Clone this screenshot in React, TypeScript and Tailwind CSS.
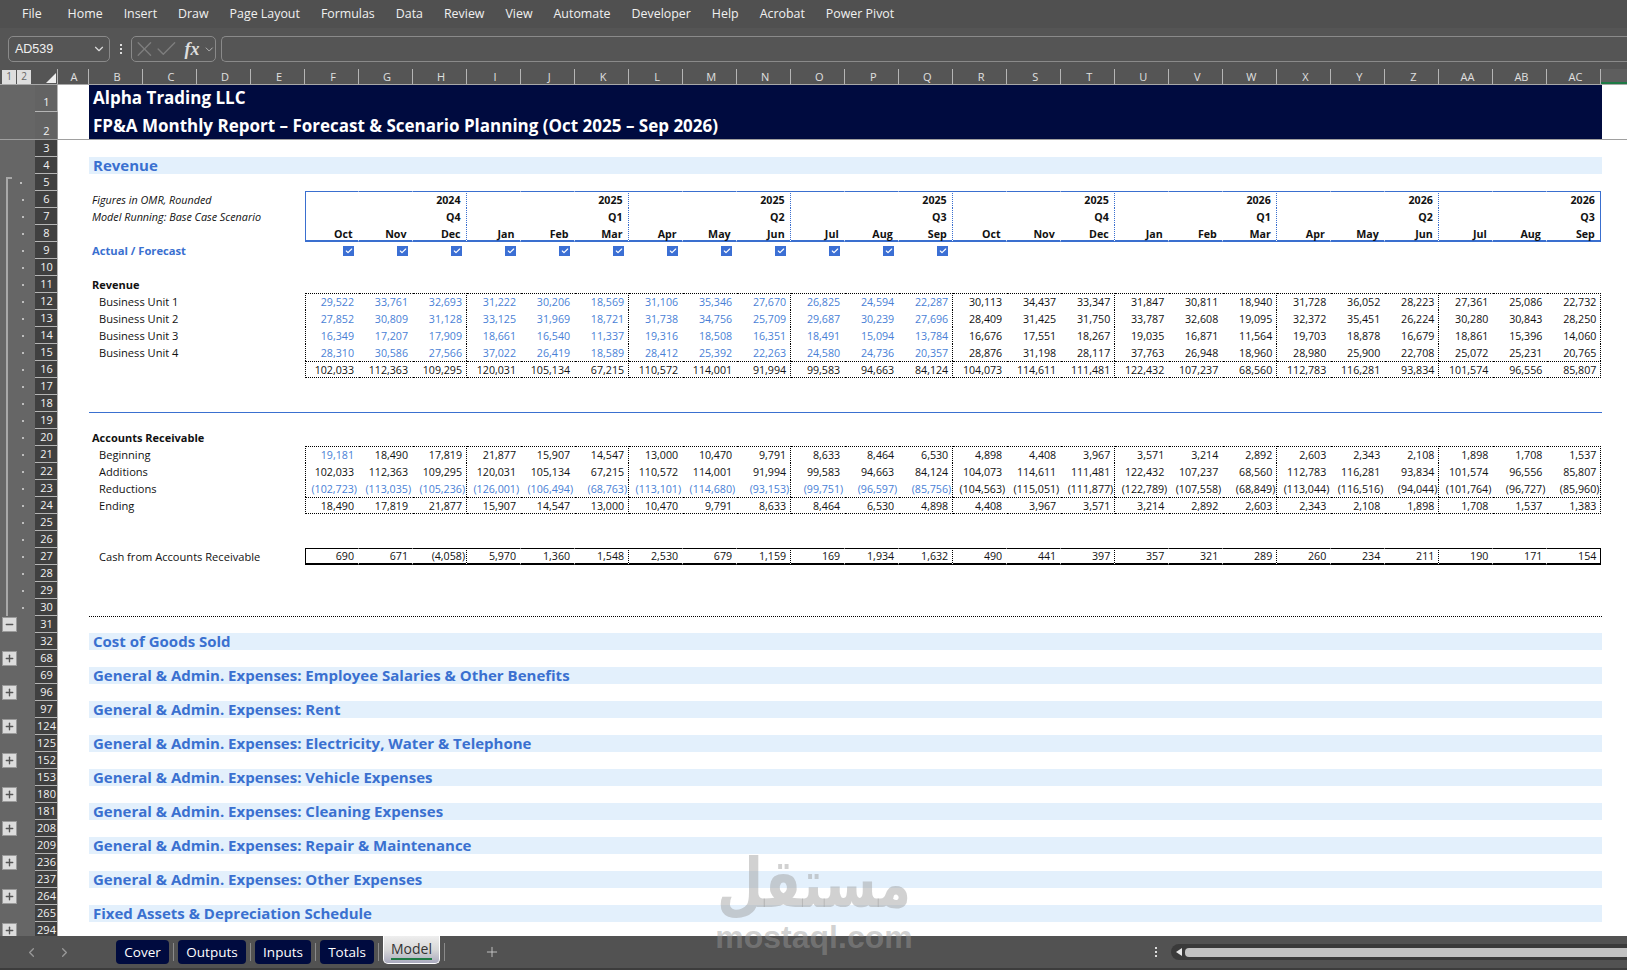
import React from "react";
import clsx from "clsx";
import { X, Check, ChevronDown, ChevronLeft, ChevronRight, Plus, Minus } from "lucide-react";

const COLS = ["F","G","H","I","J","K","L","M","N","O","P","Q","R","S","T","U","V","W","X","Y","Z","AA","AB","AC"];
const MONTHS = ["Oct","Nov","Dec","Jan","Feb","Mar","Apr","May","Jun","Jul","Aug","Sep","Oct","Nov","Dec","Jan","Feb","Mar","Apr","May","Jun","Jul","Aug","Sep"];
const YEARS = ["2024","2025","2025","2025","2025","2026","2026","2026"];
const QUARTERS = ["Q4","Q1","Q2","Q3","Q4","Q1","Q2","Q3"];
const sp = (s: string) => s.split(" ");

const TOTAL = sp("102,033 112,363 109,295 120,031 105,134 67,215 110,572 114,001 91,994 99,583 94,663 84,124 104,073 114,611 111,481 122,432 107,237 68,560 112,783 116,281 93,834 101,574 96,556 85,807");
const DATA: Record<number, string[]> = {
  12: sp("29,522 33,761 32,693 31,222 30,206 18,569 31,106 35,346 27,670 26,825 24,594 22,287 30,113 34,437 33,347 31,847 30,811 18,940 31,728 36,052 28,223 27,361 25,086 22,732"),
  13: sp("27,852 30,809 31,128 33,125 31,969 18,721 31,738 34,756 25,709 29,687 30,239 27,696 28,409 31,425 31,750 33,787 32,608 19,095 32,372 35,451 26,224 30,280 30,843 28,250"),
  14: sp("16,349 17,207 17,909 18,661 16,540 11,337 19,316 18,508 16,351 18,491 15,094 13,784 16,676 17,551 18,267 19,035 16,871 11,564 19,703 18,878 16,679 18,861 15,396 14,060"),
  15: sp("28,310 30,586 27,566 37,022 26,419 18,589 28,412 25,392 22,263 24,580 24,736 20,357 28,876 31,198 28,117 37,763 26,948 18,960 28,980 25,900 22,708 25,072 25,231 20,765"),
  16: TOTAL,
  21: sp("19,181 18,490 17,819 21,877 15,907 14,547 13,000 10,470 9,791 8,633 8,464 6,530 4,898 4,408 3,967 3,571 3,214 2,892 2,603 2,343 2,108 1,898 1,708 1,537"),
  22: TOTAL,
  23: sp("(102,723) (113,035) (105,236) (126,001) (106,494) (68,763) (113,101) (114,680) (93,153) (99,751) (96,597) (85,756) (104,563) (115,051) (111,877) (122,789) (107,558) (68,849) (113,044) (116,516) (94,044) (101,764) (96,727) (85,960)"),
  24: sp("18,490 17,819 21,877 15,907 14,547 13,000 10,470 9,791 8,633 8,464 6,530 4,898 4,408 3,967 3,571 3,214 2,892 2,603 2,343 2,108 1,898 1,708 1,537 1,383"),
  27: sp("690 671 (4,058) 5,970 1,360 1,548 2,530 679 1,159 169 1,934 1,632 490 441 397 357 321 289 260 234 211 190 171 154"),
};
const LABELS: Record<number, string> = {
  12: "Business Unit 1", 13: "Business Unit 2", 14: "Business Unit 3", 15: "Business Unit 4",
  21: "Beginning", 22: "Additions", 23: "Reductions", 24: "Ending", 27: "Cash from Accounts Receivable",
};
const BANDS: Record<number, string> = {
  4: "Revenue",
  32: "Cost of Goods Sold",
  69: "General & Admin. Expenses: Employee Salaries & Other Benefits",
  97: "General & Admin. Expenses: Rent",
  125: "General & Admin. Expenses: Electricity, Water & Telephone",
  153: "General & Admin. Expenses: Vehicle Expenses",
  181: "General & Admin. Expenses: Cleaning Expenses",
  209: "General & Admin. Expenses: Repair & Maintenance",
  237: "General & Admin. Expenses: Other Expenses",
  265: "Fixed Assets & Depreciation Schedule",
};
const ROWS = [
  ...Array.from({ length: 30 }, (_, i) => i + 3),
  68, 69, 96, 97, 124, 125, 152, 153, 180, 181, 208, 209, 236, 237, 264, 265, 294,
];
const PLUS = [68, 96, 124, 152, 180, 208, 236, 264, 294];

function Outline({ n }: { n: number }) {
  if (n === 5)
    return (
      <div className="w-[35px] shrink-0 flex items-center bg-[#666666]">
        <div className="ml-[6px] mt-[3px] w-[6px] self-stretch border-l-2 border-t-2 border-[#a8a8a8]" />
        <div className="ml-[8px] w-[2px] h-[2px] bg-[#bdbdbd]" />
      </div>
    );
  if (n > 5 && n <= 30)
    return (
      <div className="w-[35px] shrink-0 flex items-center bg-[#666666]">
        <div className="ml-[6px] w-[2px] self-stretch bg-[#a8a8a8]" />
        <div className="ml-[14px] w-[2px] h-[2px] bg-[#bdbdbd]" />
      </div>
    );
  if (n === 31 || PLUS.includes(n))
    return (
      <div className="w-[35px] shrink-0 flex items-start bg-[#666666]">
        <div className="ml-[2px] mt-[1px] w-[15px] h-[15px] bg-[#dcdcdc] border border-[#9a9a9a] flex items-center justify-center text-[#555555]">
          {n === 31 ? <Minus size={11} strokeWidth={3} /> : <Plus size={11} strokeWidth={3} />}
        </div>
      </div>
    );
  return <div className="w-[35px] shrink-0 bg-[#666666]" />;
}

function Head({ n, light, tall }: { n: number; light?: boolean; tall?: boolean }) {
  return (
    <div
      className={clsx(
        "w-[23px] shrink-0 flex justify-center pl-[1px] border-r border-[#8a8a8a] text-[11px] text-[#f2f2f2]",
        light ? "bg-[#636363] items-end" : "bg-[#404040] items-center pt-[1px] border-b border-[#b5b5b5]",
        tall && "border-b border-[#b5b5b5] pb-[1px]"
      )}
    >
      {n}
    </div>
  );
}

function Values({ n }: { n: number }) {
  const vals = DATA[n];
  const boxed = n === 27;
  const topDot = n === 12 || n === 16 || n === 21 || n === 24;
  const botDot = n === 16 || n === 24;
  return (
    <>
      {vals.map((v, i) => {
        const paren = v.startsWith("(");
        const blue = (n >= 12 && n <= 15 && i < 12) || (n === 23 && i < 12) || (n === 21 && i === 0);
        const qEnd = i % 3 === 2;
        return (
          <div
            key={i}
            className={clsx(
              "w-[54.02px] shrink-0 flex items-center justify-end border-black",
              paren ? "pr-[1px]" : "pr-[4px]",
              blue ? "text-[#4a7fd6]" : "text-[#111111]",
              i === 0 && "border-l",
              i === 0 && !boxed && "[border-left-style:dotted]",
              "border-r",
              !qEnd && "border-r-transparent",
              qEnd && !(boxed && i === 23) && "[border-right-style:dotted]",
              boxed && "border-t border-b-2",
              topDot && "border-t [border-top-style:dotted]",
              botDot && "border-b [border-bottom-style:dotted]"
            )}
          >
            {v}
          </div>
        );
      })}
    </>
  );
}

function HeaderCells({ kind }: { kind: number }) {
  return (
    <>
      {COLS.map((_, i) => {
        const q = Math.floor(i / 3);
        const qEnd = i % 3 === 2;
        const text = kind === 6 ? (qEnd ? YEARS[q] : "") : kind === 7 ? (qEnd ? QUARTERS[q] : "") : MONTHS[i];
        return (
          <div
            key={i}
            className={clsx(
              "w-[54.02px] shrink-0 flex items-center justify-end pr-[5.5px] font-bold text-[#111111] border-[#3a6fcf]",
              i === 0 && "border-l",
              "border-r",
              !qEnd && "border-r-transparent",
              qEnd && i !== 23 && "[border-right-style:dotted]",
              kind === 6 && "border-t",
              kind === 8 && "border-b-2 pt-[2px]"
            )}
          >
            {text}
          </div>
        );
      })}
    </>
  );
}

function Checks() {
  return (
    <>
      {COLS.map((_, i) => (
        <div key={i} className="w-[54.02px] shrink-0 flex items-center justify-end pr-[5px]">
          {i < 12 && (
            <div className="w-[11px] h-[10px] bg-[#3b6fd4] flex items-center justify-center text-white">
              <Check size={8} strokeWidth={3.5} />
            </div>
          )}
        </div>
      ))}
    </>
  );
}

function Label({ children, className }: { children?: React.ReactNode; className?: string }) {
  return <div className={clsx("w-[216px] shrink-0 flex items-center whitespace-nowrap pt-[1px] text-[#111111]", className)}>{children}</div>;
}

function SheetRow({ n }: { n: number }) {
  let content: React.ReactNode = null;
  let rowCls = "";
  if (BANDS[n]) {
    content = (
      <div className="w-[1513px] shrink-0 bg-[#e3f0fc] flex items-center pl-[4px] pb-[1px] text-[15px] font-bold text-[#3a70d0] whitespace-nowrap">
        {BANDS[n]}
      </div>
    );
  } else if (n === 6 || n === 7) {
    content = (
      <>
        <Label className="pl-[3px] italic text-[10.8px]">{n === 6 ? "Figures in OMR, Rounded" : "Model Running: Base Case Scenario"}</Label>
        <HeaderCells kind={n} />
      </>
    );
  } else if (n === 8) {
    content = (
      <>
        <Label />
        <HeaderCells kind={8} />
      </>
    );
  } else if (n === 9) {
    content = (
      <>
        <Label className="pl-[3px] font-bold text-[11.2px] !text-[#3a70d0]">Actual / Forecast</Label>
        <Checks />
      </>
    );
  } else if (n === 11 || n === 20) {
    content = <Label className="pl-[3px] font-bold text-[11px]">{n === 11 ? "Revenue" : "Accounts Receivable"}</Label>;
  } else if (DATA[n]) {
    content = (
      <>
        <Label className="pl-[10px] text-[11.1px]">{LABELS[n]}</Label>
        <Values n={n} />
      </>
    );
  } else if (n === 19) {
    rowCls = "border-t border-[#3a70d0] w-[1513px]";
  } else if (n === 31) {
    rowCls = "border-t [border-top-style:dotted] border-black w-[1513px]";
  }
  return (
    <div className="flex h-[17px] shrink-0">
      <Outline n={n} />
      <Head n={n} />
      <div className="flex-1 flex bg-white text-[10.67px]">
        <div className="w-[31px] shrink-0" />
        {rowCls ? <div className={rowCls} /> : content}
      </div>
    </div>
  );
}

function TitleRow({ n, text, big }: { n: number; text: string; big?: boolean }) {
  return (
    <div className={clsx("flex shrink-0", big ? "h-[28px] border-b border-[#a0a0a0]" : "h-[27px]")}>
      <div className="w-[35px] shrink-0 bg-[#666666]" />
      <Head n={n} light tall={n === 1} />
      <div className="flex-1 flex bg-white">
        <div className="w-[31px] shrink-0" />
        <div className={clsx("w-[1513px] shrink-0 bg-[#000b3f] flex items-center pl-[4px] text-white font-bold text-[17px] whitespace-nowrap", !big && "pb-[1px]")}>
          {text}
        </div>
      </div>
    </div>
  );
}

const MENU = ["Home","Insert","Draw","Page Layout","Formulas","Data","Review","View","Automate","Developer","Help","Acrobat","Power Pivot"];

function Tab({ label, ml }: { label: string; ml: string }) {
  return (
    <div className={clsx("h-[24px] bg-[#000b3f] rounded-[4px] flex items-center justify-center text-white text-[13.5px]", ml)}>
      {label}
    </div>
  );
}

const TabSep = () => <div className="w-px h-[18px] bg-[#8a8a8a] mx-[4px] mt-[3px]" />;

export default function App() {
  return (
    <div className="relative w-[1627px] h-[970px] overflow-hidden flex flex-col bg-[#555555] font-['Open_Sans',sans-serif]">
      {/* Ribbon tabs */}
      <div className="h-[28px] shrink-0 flex items-center bg-[#505050] pl-[22px] gap-[21px] text-[12.4px] text-[#f0f0f0] shadow-[0_1px_2px_#333333]">
        <span className="mr-[5px]">File</span>
        {MENU.map((m) => (
          <span key={m}>{m}</span>
        ))}
      </div>
      {/* Formula bar */}
      <div className="h-[41px] shrink-0 flex items-start pt-[8px] pl-[8px] bg-[#555555]">
        <div className="w-[102px] h-[26px] border border-[#8a8a8a] rounded-[5px] flex items-center justify-between pl-[6px] pr-[3px] text-[12.5px] text-[#f0f0f0] font-['Liberation_Sans',sans-serif]">
          AD539
          <ChevronDown size={14} className="text-[#dddddd]" />
        </div>
        <div className="w-[21px] h-[26px] flex flex-col items-center justify-center gap-[2px]">
          <div className="w-[2px] h-[2px] bg-[#dddddd]" />
          <div className="w-[2px] h-[2px] bg-[#dddddd]" />
          <div className="w-[2px] h-[2px] bg-[#dddddd]" />
        </div>
        <div className="w-[85px] h-[26px] border border-[#8a8a8a] rounded-[5px] flex items-center">
          <X size={26} strokeWidth={1.3} className="text-[#7e7e7e]" />
          <Check size={26} strokeWidth={1.3} className="text-[#7e7e7e] -ml-[3px]" />
          <span className="ml-[6px] font-['Liberation_Serif',serif] italic font-bold text-[18px] text-[#dddddd]">fx</span>
          <ChevronDown size={13} strokeWidth={1.5} className="text-[#cccccc] ml-[3px]" />
        </div>
        <div className="ml-[5px] flex-1 h-[26px] border border-r-0 border-[#8a8a8a] rounded-l-[5px]" />
      </div>
      {/* Column headers */}
      <div className="h-[16px] shrink-0 flex border-b border-[#a8a8a8] text-[11px] text-[#e0e0e0]">
        <div className="w-[35px] shrink-0 flex items-center gap-[1px] pl-[2px]">
          <div className="w-[14px] h-[14px] bg-[#dedede] text-[#666666] flex items-center justify-center text-[10px]">1</div>
          <div className="w-[14px] h-[14px] bg-[#dedede] text-[#666666] flex items-center justify-center text-[10px]">2</div>
        </div>
        <div className="w-[23px] shrink-0 flex items-end justify-end pr-[1px] pb-[1px] border-r border-[#b5b5b5]">
          <svg width="10" height="10" viewBox="0 0 10 10"><path d="M10 0V10H0Z" fill="#eeeeee" /></svg>
        </div>
        <div className="w-[31px] shrink-0 flex items-center justify-center pl-[2px] pt-[1px] border-r border-[#b5b5b5]">A</div>
        {["B","C","D","E",...COLS].map((c) => (
          <div key={c} className="w-[54.02px] shrink-0 flex items-center justify-center pl-[3px] pt-[1px] border-r border-[#b5b5b5]">{c}</div>
        ))}
        <div className="flex-1 border-b-2 border-[#1e7a45] bg-[#5e5e5e]" />
      </div>
      {/* Grid */}
      <div className="flex-1 min-h-0 overflow-hidden flex flex-col">
        <TitleRow n={1} text="Alpha Trading LLC" />
        <TitleRow n={2} text="FP&A Monthly Report – Forecast & Scenario Planning (Oct 2025 – Sep 2026)" big />
        {ROWS.map((n) => (
          <SheetRow key={n} n={n} />
        ))}
      </div>
      {/* Sheet tabs */}
      <div className="h-[34px] shrink-0 bg-[#525252] border-b-2 border-[#3c3c3c] flex items-start text-white">
        <div className="h-[32px] flex items-center pl-[24px] gap-[18px] text-[#9a9a9a]">
          <ChevronLeft size={15} />
          <ChevronRight size={15} />
        </div>
        <div className="flex items-start h-[28px] mt-[4px] ml-[44px]">
          <Tab label="Cover" ml="w-[53px]" />
          <TabSep />
          <Tab label="Outputs" ml="w-[68px]" />
          <TabSep />
          <Tab label="Inputs" ml="w-[56px]" />
          <TabSep />
          <Tab label="Totals" ml="w-[54px]" />
          <TabSep />
          <div className="-mt-[4px] w-[57px] h-[28px] rounded-b-[5px] border border-t-0 border-white bg-gradient-to-b from-[#eeeeee] via-[#d8d8d8] to-[#aaaabe] flex flex-col items-center text-[#333333] text-[14px] pt-[4px] leading-[18px]">
            Model
            <div className="w-[41px] h-[2px] bg-[#1e7a45]" />
          </div>
          <TabSep />
          <Plus size={16} strokeWidth={1.3} className="ml-[35px] mt-[4px] text-[#cfcfcf]" />
        </div>
        <div className="ml-auto h-[32px] flex items-center">
          <div className="flex flex-col gap-[2px] mr-[14px]">
            <div className="w-[2px] h-[2px] bg-[#dddddd]" />
            <div className="w-[2px] h-[2px] bg-[#dddddd]" />
            <div className="w-[2px] h-[2px] bg-[#dddddd]" />
          </div>
          <div className="w-[456px] h-[16px] bg-[#3a3a3a] rounded-l-[8px] flex items-center pl-[5px]">
            <svg width="6" height="8" viewBox="0 0 6 8" className="mr-[3px]"><path d="M6 0V8L0 4Z" fill="#e6e6e6" /></svg>
            <div className="flex-1 h-[9px] bg-[#c2c2c2] rounded-l-[4px]" />
          </div>
        </div>
      </div>
      {/* Watermark */}
      <div className="absolute left-[716px] top-[855px] w-[196px] pointer-events-none flex flex-col items-center text-[#9a9a9a]/45">
        <svg width="196" height="65" viewBox="0 0 196 65" className="block overflow-visible">
          <text x="98" y="52" textAnchor="middle" direction="rtl" textLength="194" lengthAdjust="spacingAndGlyphs" fontFamily="DejaVu Sans" fontWeight="bold" fontSize="68" fill="currentColor">مستقل</text>
        </svg>
        <div className="mt-[3px] text-[32px] leading-[28px] font-bold font-['Liberation_Sans',sans-serif]">mostaql.com</div>
      </div>
    </div>
  );
}
